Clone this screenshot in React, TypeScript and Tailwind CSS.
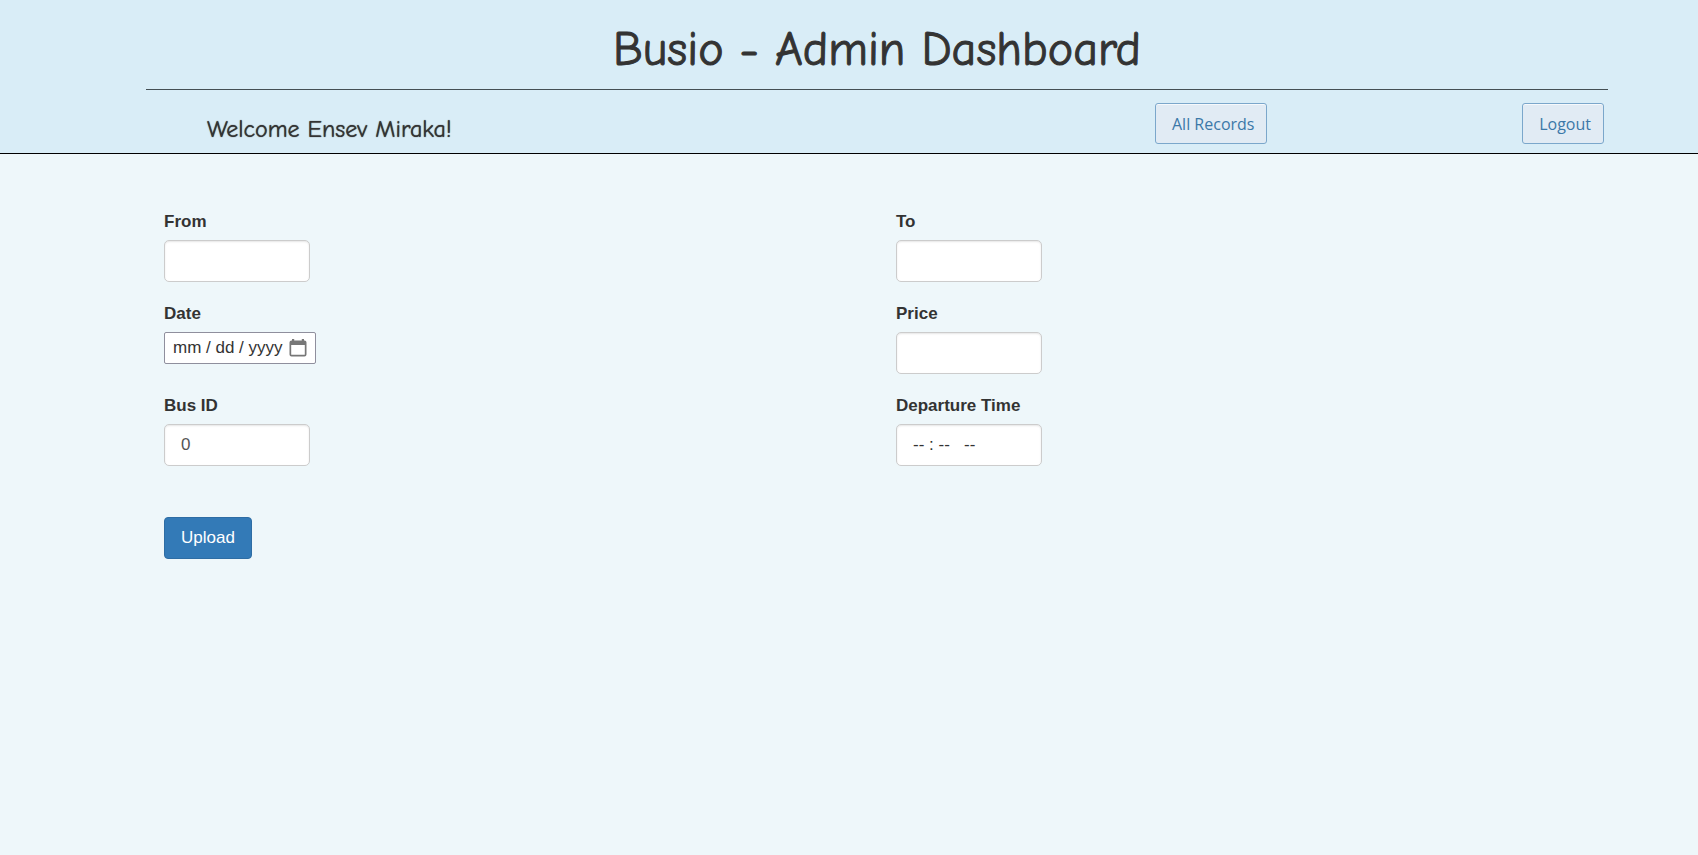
import type { InputHTMLAttributes, ReactNode } from "react";

const inputClass =
  "block h-[42px] w-[146px] rounded-[5px] border border-[#ccc] bg-white px-4 text-[17px] text-[#555] shadow-[inset_0_1px_2px_rgba(0,0,0,0.1)] outline-none placeholder:text-[#333] placeholder:opacity-100 focus:border-[#66afe9]";

const headerButtonClass =
  "h-[41px] rounded-[3px] border border-[#7ba7cb] bg-[#e1ebf4] pr-3 pl-4 font-['Segoe_UI','Open_Sans',sans-serif] text-base text-[#3b78a8] shadow-[inset_0_1px_0_rgba(255,255,255,0.7)]";

function Field({ id, label, children }: { id: string; label: string; children: ReactNode }) {
  return (
    <div className="h-[92px]">
      <label htmlFor={id} className="block pb-1 text-[17px] leading-7 font-bold">
        {label}
      </label>
      {children}
    </div>
  );
}

function TextField({
  id,
  label,
  ...rest
}: { id: string; label: string } & InputHTMLAttributes<HTMLInputElement>) {
  return (
    <Field id={id} label={label}>
      <input id={id} type="text" className={inputClass} {...rest} />
    </Field>
  );
}

function CalendarIcon() {
  return (
    <svg width="18" height="18" viewBox="0 0 18 18" className="shrink-0" aria-hidden="true">
      <path
        fill="#777"
        fillRule="evenodd"
        d="M3 0h2.200v1.500h7.600V0H15v1.500h.5A2 2 0 0 1 17.500 3.500V15.500A2 2 0 0 1 15.500 17.500H2.500A2 2 0 0 1 .5 15.500V3.500A2 2 0 0 1 2.500 1.500H3zM2.200 6v9.300q0 .5.5.5h12.600q.5 0 .5-.5V6z"
      />
    </svg>
  );
}

export default function App() {
  return (
    <div className="min-h-screen bg-[#eef7fa] font-['Liberation_Sans',Arial,sans-serif] text-[#333]">
      <header className="border-b border-black bg-[#d9edf7] pr-[90px] pl-[146px] font-['Comic_Sans_MS','Comic_Neue','Open_Sans',sans-serif]">
        <h1 className="border-b border-[#444f54] pt-[18px] pb-[7px] text-center text-5xl leading-[64px] [-webkit-text-stroke:1px_#333]">
          Busio - Admin Dashboard
        </h1>
        <div className="flex h-[63px] items-start pt-[13px] pr-1 pl-[61px]">
          <p className="flex-1 pt-2 text-2xl leading-9 [text-shadow:0_0_1px_#333]">
            Welcome Ensev Miraka!
          </p>
          <nav className="flex w-[449px] justify-between">
            <button type="button" className={headerButtonClass}>
              All Records
            </button>
            <button type="button" className={headerButtonClass}>
              Logout
            </button>
          </nav>
        </div>
      </header>
      <main className="pt-[54px] pr-[70px] pl-[164px]">
        <form>
          <div className="grid grid-cols-2">
            <TextField id="from" label="From" />
            <TextField id="to" label="To" />
            <Field id="date" label="Date">
              <div className="flex h-8 w-[152px] items-center rounded-[2px] border border-[#8f8f9d] bg-white px-2">
                <input
                  id="date"
                  type="text"
                  placeholder="mm / dd / yyyy"
                  className="min-w-0 flex-1 bg-transparent text-[17px] outline-none placeholder:text-[#333] placeholder:opacity-100"
                />
                <CalendarIcon />
              </div>
            </Field>
            <TextField id="price" label="Price" />
            <TextField id="bus-id" label="Bus ID" defaultValue="0" />
            <TextField id="departure" label="Departure Time" placeholder="-- : --   --" />
          </div>
          <button
            type="submit"
            className="mt-[33px] h-[42px] rounded-[4px] border border-[#2e6da4] bg-[#337ab7] px-4 text-[17px] text-white"
          >
            Upload
          </button>
        </form>
      </main>
    </div>
  );
}
